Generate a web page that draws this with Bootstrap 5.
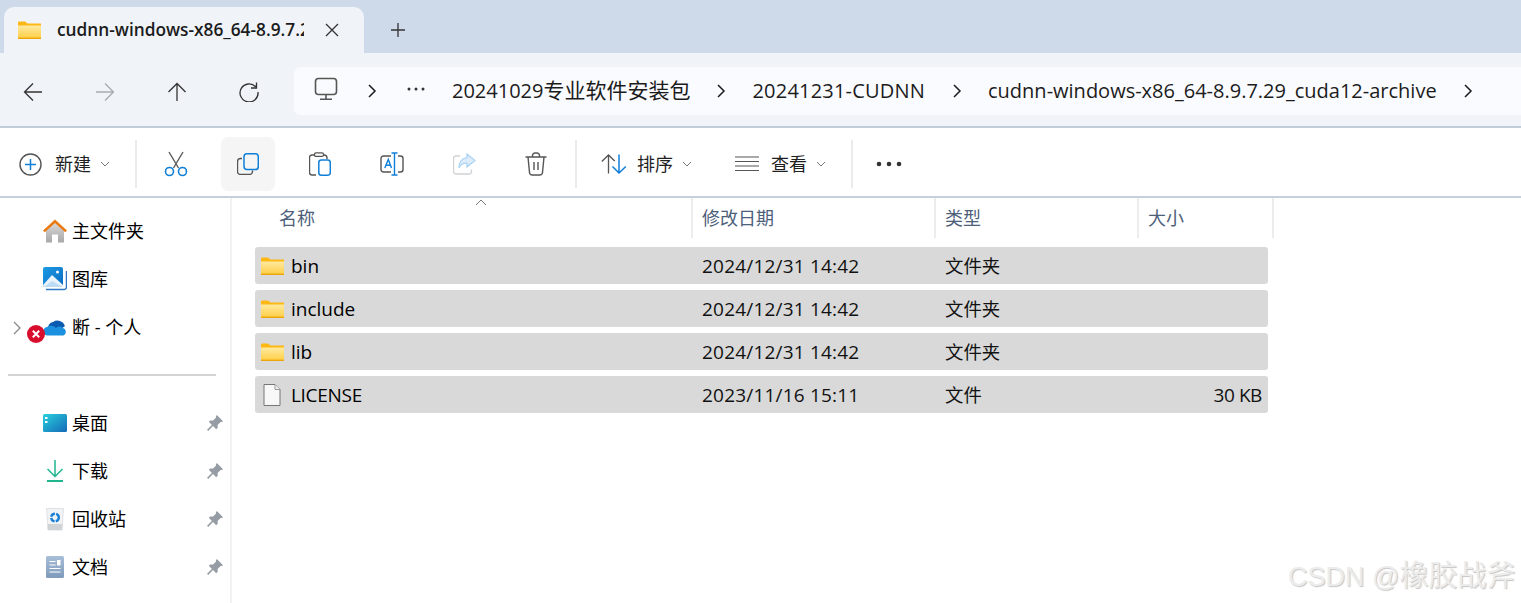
<!DOCTYPE html>
<html lang="zh"><head><meta charset="utf-8"><title>cudnn-windows-x86_64-8.9.7.29_cuda12-archive</title>
<link href="https://cdn.jsdelivr.net/npm/bootstrap@5.3.0/dist/css/bootstrap.min.css" rel="stylesheet">
<style>
html,body{height:100%;overflow:hidden}
body{font-family:"Open Sans","Noto Sans CJK SC",sans-serif;background:#fff;color:#1a1a1a;font-size:19px;position:relative}
.ex-title{height:53px;background:#cedaea;padding-left:4px;padding-top:7px}
.ex-tab{width:360px;height:46px;background:#f0f4f9;border-radius:10px 10px 0 0;padding-left:14px}
.ex-tabname{width:247px;margin-left:16px;overflow:hidden;white-space:nowrap;font-size:17.3px;font-weight:600;color:#1c1c1c;font-family:"Open Sans",sans-serif;flex:none}
.ex-close{margin-left:20px}.ex-plus{margin-left:26px}
.ex-nav{height:75px;background:#f0f4f9;border-bottom:2px solid #c1ccdb;padding-top:14px}
.ex-navbtn{width:72px;height:50px}
.ex-navset{width:294px;flex:none}
.ex-navset>:first-child{margin-left:-3px}
.ex-addr{height:48px;background:#fafbfe;border-radius:7px 0 0 7px;white-space:nowrap;font-size:20px;color:#1c1c1c}
.ex-addr b{font-weight:400;font-size:21px}
.ex-tools{height:70px;border-bottom:2px solid #c5d0df;padding:9px 0 5px}
.ex-tool{width:72px;height:54px;border-radius:7px}
.ex-active{background:#f5f5f5;width:54px;margin:0 9px}
.ex-sep{width:2px;height:48px;background:#ebebeb}
.ex-lbl{font-size:18px;color:#1f1f1f}
.ex-main{height:405px}
.ex-side{width:232px;border-right:2px solid #f2f2f2;padding-top:9px;flex:none}
.ex-sitem{height:48px;position:relative;font-size:18px;color:#000;padding-left:43px}
.ex-sitem svg.ic{width:24px;height:24px;margin-right:5px;flex:none}
.ex-pin{position:absolute;left:207px;top:16px}
.ex-rule{height:48px;padding:0 14px 0 8px}
.ex-rule>div{height:2px;background:#d4d4d4;width:209px}
.ex-files{padding-left:23px;position:relative}
.ex-head{height:40px;font-size:18px;color:#4c607a;width:1019px;margin-bottom:9px}
.ex-hc{height:40px;border-right:2px solid #ececec;padding-left:9px;padding-top:6px;flex:none;line-height:28px}
.ex-row{height:37px;width:1013px;background:#d9d9d9;border-radius:3px;margin-bottom:6px;font-size:19px;color:#111;padding-top:1px}
.ex-c1{width:447px;padding-left:6px;color:#000}
.ex-c1 svg{margin-right:7px;flex:none}
.ex-lic{letter-spacing:-.3px}
.ex-c2{width:243px;letter-spacing:.2px}.ex-c3{width:205px;font-size:18.4px}.ex-c4{width:118px;text-align:right;padding-right:6px;letter-spacing:-.4px}
.ex-sort{position:absolute;left:243px;top:1px}
.ex-mark{position:absolute;left:1288px;top:555px;font-size:29px;line-height:42px;color:#ececec;text-shadow:1px 1px 1px #c6c6c6;font-family:"Liberation Sans","Noto Sans CJK SC",sans-serif;white-space:nowrap}
.ex-mark i{font-style:normal;font-size:27px}
</style></head><body>
<svg width="0" height="0" class="position-absolute"><defs>
<linearGradient id="gf" x1="0" y1="0" x2="0" y2="1"><stop offset="0" stop-color="#ffeaa0"/><stop offset="1" stop-color="#ffcf48"/></linearGradient>
<linearGradient id="gh" x1="0" y1="0" x2="0" y2="1"><stop offset="0" stop-color="#dadada"/><stop offset="1" stop-color="#a8a8a8"/></linearGradient>
<linearGradient id="gd" x1="0" y1="0" x2="1" y2="1"><stop offset="0" stop-color="#2ad0dc"/><stop offset="1" stop-color="#1369b8"/></linearGradient>
<linearGradient id="gp" x1="0" y1="0" x2="1" y2="1"><stop offset="0" stop-color="#1d9be4"/><stop offset="1" stop-color="#0a6bc2"/></linearGradient>
<linearGradient id="gm" x1="0" y1="0" x2="0" y2="1"><stop offset="0" stop-color="#a9bfd8"/><stop offset="1" stop-color="#7e99ba"/></linearGradient>
<symbol id="folder" viewBox="0 0 23 18"><path d="M0 1.500A1 1 0 0 1 1 .5h6l2.500 2H23V5H0z" fill="#fdb813"/><path d="M0 4.500h23V17H0z" fill="url(#gf)"/><path d="M0 16.600h23V18H0z" fill="#eda50c"/></symbol>
<symbol id="pin" viewBox="0 0 16 16"><path d="M9.800 0 16 6.200l-1.400.9-1-.2-3 3 .1 2.900-1.500 1.400-3.200-3.200L1.200 16 0 14.800l4.900-4.800-3.100-3.200 1.400-1.400 2.900.1 3-3-.2-1z" fill="#959ca3"/></symbol>
<symbol id="chev" viewBox="0 0 10 16"><path d="M2 2l6 6-6 6" fill="none" stroke="#1c1c1c" stroke-width="1.500"/></symbol>
<symbol id="dn" viewBox="0 0 10 6"><path d="M1 1l4 4 4-4" fill="none" stroke="#777" stroke-width="1"/></symbol>
</defs></svg>

<div class="ex-title d-flex align-items-start">
 <div class="ex-tab d-flex align-items-center">
  <svg width="23" height="18"><use href="#folder"/></svg>
  <div class="ex-tabname">cudnn-windows-x86_64-8.9.7.29_cuda12-archive</div>
  <svg class="ex-close" width="16" height="16" viewBox="0 0 16 16"><path d="M2 2l12 12M14 2 2 14" stroke="#333" stroke-width="1.300"/></svg>
 </div>
 <svg class="ex-plus align-self-center" width="16" height="16" viewBox="0 0 16 16"><path d="M8 1v14M1 8h14" stroke="#333" stroke-width="1.300"/></svg>
</div>

<div class="ex-nav d-flex">
 <div class="ex-navset d-flex">
  <div class="ex-navbtn d-flex align-items-center justify-content-center"><svg width="20" height="20" viewBox="0 0 20 20"><path d="M19 10H1.500M10 1.500 1.500 10l8.500 8.500" fill="none" stroke="#333" stroke-width="1.300"/></svg></div>
  <div class="ex-navbtn d-flex align-items-center justify-content-center"><svg width="20" height="20" viewBox="0 0 20 20"><path d="M1 10h17.500M10 1.500l8.500 8.500-8.500 8.500" fill="none" stroke="#a8abae" stroke-width="1.300"/></svg></div>
  <div class="ex-navbtn d-flex align-items-center justify-content-center"><svg width="20" height="20" viewBox="0 0 20 20"><path d="M10 19V1.500M1.500 10 10 1.500l8.500 8.500" fill="none" stroke="#333" stroke-width="1.300"/></svg></div>
  <div class="ex-navbtn d-flex align-items-center justify-content-center"><svg width="20" height="20" viewBox="0 0 20 20"><path d="M16.800 5A9 9 0 1 0 19 10" fill="none" stroke="#333" stroke-width="1.300"/><path d="M17.500 .5v5.500H12" fill="none" stroke="#333" stroke-width="1.300"/></svg></div>
 </div>
 <div class="ex-addr flex-grow-1 d-flex align-items-center">
  <svg width="24" height="24" viewBox="0 0 24 24" style="margin-left:20px;margin-top:-4px"><rect x="1.500" y="1.500" width="21" height="16" rx="3" fill="none" stroke="#555" stroke-width="1.600"/><path d="M12 18v4M6 22.300h12" stroke="#555" stroke-width="1.600"/></svg>
  <svg width="10" height="16" style="margin-left:29px"><use href="#chev"/></svg>
  <svg width="18" height="4" viewBox="0 0 18 4" style="margin-left:30px;margin-top:-4px"><circle cx="2" cy="2" r="1.500" fill="#333"/><circle cx="9" cy="2" r="1.500" fill="#333"/><circle cx="16" cy="2" r="1.500" fill="#333"/></svg>
  <span style="margin-left:27px">20241029<b>专业软件安装包</b></span>
  <svg width="10" height="16" style="margin-left:26px"><use href="#chev"/></svg>
  <span style="margin-left:26px;letter-spacing:.2px">20241231-CUDNN</span>
  <svg width="10" height="16" style="margin-left:27px"><use href="#chev"/></svg>
  <span style="margin-left:26px">cudnn-windows-x86_64-8.9.7.29_cuda12-archive</span>
  <svg width="10" height="16" style="margin-left:26px"><use href="#chev"/></svg>
 </div>
</div>

<div class="ex-tools d-flex align-items-center">
 <div class="d-flex align-items-center" style="width:135px;padding-left:19px">
  <svg width="23" height="23" viewBox="0 0 23 23"><circle cx="11.500" cy="11.500" r="10.500" fill="none" stroke="#555" stroke-width="1.400"/><path d="M11.500 6v11M6 11.500h11" stroke="#0f7fd8" stroke-width="1.500"/></svg>
  <span class="ex-lbl" style="margin-left:13px">新建</span>
  <svg width="10" height="6" style="margin-left:9px"><use href="#dn"/></svg>
 </div>
 <div class="ex-sep"></div>
 <div class="ex-tool d-flex align-items-center justify-content-center" style="margin-left:3px">
  <svg width="24" height="26" viewBox="0 0 24 26"><path d="M5 1l9.500 16M19 1 9.500 17" stroke="#5a5a5a" stroke-width="1.400"/><circle cx="5.500" cy="20.500" r="4" fill="none" stroke="#0f7fd8" stroke-width="1.600"/><circle cx="18.500" cy="20.500" r="4" fill="none" stroke="#0f7fd8" stroke-width="1.600"/></svg>
 </div>
 <div class="ex-tool ex-active d-flex align-items-center justify-content-center">
  <svg width="22" height="22" viewBox="0 0 22 22"><path d="M5 5.500H3.500a3 3 0 0 0-3 3V18.500a3 3 0 0 0 3 3h9a3 3 0 0 0 3-3V17.500" fill="none" stroke="#555" stroke-width="1.400"/><rect x="7" y=".8" width="14.300" height="15.800" rx="3" fill="none" stroke="#0f7fd8" stroke-width="1.500"/></svg>
 </div>
 <div class="ex-tool d-flex align-items-center justify-content-center">
  <svg width="22" height="24" viewBox="0 0 22 24"><path d="M6 3H3a2.500 2.500 0 0 0-2.500 2.500V20.500A2.500 2.500 0 0 0 3 23h4M14 3h1a3 3 0 0 1 3 3v1" fill="none" stroke="#555" stroke-width="1.400"/><rect x="5.500" y=".8" width="9" height="3.600" rx="1.500" fill="none" stroke="#555" stroke-width="1.300"/><rect x="9.800" y="8" width="11.500" height="15.200" rx="2.500" fill="none" stroke="#0f7fd8" stroke-width="1.500"/></svg>
 </div>
 <div class="ex-tool d-flex align-items-center justify-content-center">
  <svg width="24" height="24" viewBox="0 0 24 24"><path d="M11 4H3.500A2.500 2.500 0 0 0 1 6.500v11A2.500 2.500 0 0 0 3.500 20H11M18 4h2.500A2.500 2.500 0 0 1 23 6.500v11a2.500 2.500 0 0 1-2.500 2.500H18" fill="none" stroke="#555" stroke-width="1.400"/><path d="M11.500 1h6M11.500 23h6M14.500 1v22M4.800 16 8.300 7.500 11.500 16M6 13.300h4.500" fill="none" stroke="#0f7fd8" stroke-width="1.400"/></svg>
 </div>
 <div class="ex-tool d-flex align-items-center justify-content-center">
  <svg width="23" height="22" viewBox="0 0 23 22"><path d="M7 3H3a2.500 2.500 0 0 0-2.500 2.500v13A2.500 2.500 0 0 0 3 21h13a2.500 2.500 0 0 0 2.500-2.500v-2" fill="none" stroke="#cfd2d5" stroke-width="1.300"/><path d="M14 1l8 6.500-8 6.500v-3.800C10 10 7.500 11.500 6 15c0-6 3-10 8-10.300z" fill="#dcecfa" stroke="#a9d2f3" stroke-width="1.200"/></svg>
 </div>
 <div class="ex-tool d-flex align-items-center justify-content-center">
  <svg width="22" height="24" viewBox="0 0 22 24"><path d="M.5 5h21M7.500 5V3.500a2.500 2.500 0 0 1 2.500-2.500h2a2.500 2.500 0 0 1 2.500 2.500V5M3 5l1.500 15.500A2.800 2.800 0 0 0 7.300 23h7.400a2.800 2.800 0 0 0 2.800-2.500L19 5M9 10v8M13 10v8" fill="none" stroke="#555" stroke-width="1.400"/></svg>
 </div>
 <div class="ex-sep" style="margin-left:3px"></div>
 <div class="d-flex align-items-center" style="margin-left:24px;width:134px">
  <svg width="26" height="20" viewBox="0 0 26 20"><path d="M7.500 19.500V1M.8 7.500 7.500 1l6.200 6" fill="none" stroke="#555" stroke-width="1.300"/><path d="M18 .5V19M11.500 12.500 18 19l6.800-6.500" fill="none" stroke="#0f7fd8" stroke-width="1.500"/></svg>
  <span class="ex-lbl" style="margin-left:10px">排序</span>
  <svg width="10" height="6" style="margin-left:9px"><use href="#dn"/></svg>
 </div>
 <div class="d-flex align-items-center" style="width:116px">
  <svg width="24" height="16" viewBox="0 0 24 16"><path d="M0 1h24M0 5.500h24M0 10h24M0 14.500h24" stroke="#555" stroke-width="1.200"/></svg>
  <span class="ex-lbl" style="margin-left:12px">查看</span>
  <svg width="10" height="6" style="margin-left:9px"><use href="#dn"/></svg>
 </div>
 <div class="ex-sep"></div>
 <svg width="26" height="6" viewBox="0 0 26 6" style="margin-left:23px"><circle cx="3" cy="3" r="2.300" fill="#333"/><circle cx="13" cy="3" r="2.300" fill="#333"/><circle cx="23" cy="3" r="2.300" fill="#333"/></svg>
</div>

<div class="ex-main d-flex">
 <div class="ex-side">
  <div class="ex-sitem d-flex align-items-center"><svg class="ic" viewBox="0 0 24 24"><path d="M3 11 12 3l9 8v12.500H15v-8H9v8H3z" fill="url(#gh)"/><path d="M0 11.500 12 .5l12 11-1.800 1.800L12 4 1.800 13.300z" fill="#ea7a10"/></svg>主文件夹</div>
  <div class="ex-sitem d-flex align-items-center"><svg class="ic" viewBox="0 0 24 24"><path d="M3 22.500h18a2.500 2.500 0 0 0 2.500-2.500V4" fill="none" stroke="#2f78c8" stroke-width="1.500"/><rect y="0" width="20" height="20" rx="2" fill="url(#gp)"/><circle cx="14.500" cy="5" r="1.500" fill="#fff"/><path d="M0 18 9 8l11 10v2H2a2 2 0 0 1-2-2z" fill="#e9f3fc"/><path d="M1 20l8-6 11 6z" fill="#bcdcf6"/></svg>图库</div>
  <div class="ex-sitem d-flex align-items-center">
   <svg class="position-absolute" style="left:13px;top:18px" width="9" height="14" viewBox="0 0 9 14"><path d="M1 1l6 6-6 6" fill="none" stroke="#8a8a8a" stroke-width="1.300"/></svg>
   <svg class="ic" viewBox="0 0 24 24"><path d="M5 14a6 6 0 0 1 5-7 8 8 0 0 1 12 4l-8 6z" fill="#0b5cb0"/><path d="M4.500 20.500a4.300 4.300 0 0 1-.5-8.500 7 7 0 0 1 9 1 5.500 5.500 0 0 1 7 0 4 4 0 0 1 .5 7.500z" fill="#1c91e0"/></svg>断 - 个人
   <svg class="position-absolute" style="left:27px;top:22px" width="18" height="18" viewBox="0 0 18 18"><circle cx="9" cy="9" r="9" fill="#d90d2c"/><path d="M5.800 5.800l6.400 6.400M12.200 5.800l-6.400 6.400" stroke="#fff" stroke-width="2"/></svg>
  </div>
  <div class="ex-rule d-flex align-items-center"><div></div></div>
  <div class="ex-sitem d-flex align-items-center"><svg class="ic" viewBox="0 0 24 24"><rect y="3" width="24" height="18" rx="1.500" fill="url(#gd)"/><path d="M2 6h2.500v2H2zM2 10h2.500v2H2z" fill="#fff"/></svg>桌面<svg class="ex-pin" width="16" height="16"><use href="#pin"/></svg></div>
  <div class="ex-sitem d-flex align-items-center"><svg class="ic" viewBox="0 0 24 24"><path d="M12 1v16M4.500 10l7.500 7.500 7.500-7.500" fill="none" stroke="#1fb58f" stroke-width="1.500"/><path d="M4 22h16" stroke="#1fb58f" stroke-width="2"/></svg>下载<svg class="ex-pin" width="16" height="16"><use href="#pin"/></svg></div>
  <div class="ex-sitem d-flex align-items-center"><svg class="ic" viewBox="0 0 24 24"><path d="M3.500 1.500h17L19 23H5z" fill="#f1f3f5" stroke="#dfe2e4" stroke-width="1"/><path d="M4.600 17h14.800L19 23H5z" fill="#cfd3d6"/><circle cx="12" cy="10.500" r="3.800" fill="none" stroke="#1a7fd6" stroke-width="2.400" stroke-dasharray="5 1.200"/></svg>回收站<svg class="ex-pin" width="16" height="16"><use href="#pin"/></svg></div>
  <div class="ex-sitem d-flex align-items-center"><svg class="ic" viewBox="0 0 24 24"><rect x="3" y="1" width="18" height="22" rx="1.500" fill="url(#gm)"/><path d="M6.500 6.500h6M6.500 10h6M6.500 13.500h11M6.500 17h11" stroke="#fff" stroke-width="1.200"/><path d="M14 5h3.500v5.500H14z" fill="#fff"/></svg>文档<svg class="ex-pin" width="16" height="16"><use href="#pin"/></svg></div>
 </div>
 <div class="ex-files flex-grow-1">
  <svg class="ex-sort" width="12" height="7" viewBox="0 0 12 7"><path d="M1 6l5-5 5 5" fill="none" stroke="#777" stroke-width="1"/></svg>
  <div class="ex-head d-flex">
   <div class="ex-hc" style="width:438px;padding-left:24px">名称</div>
   <div class="ex-hc" style="width:243px">修改日期</div>
   <div class="ex-hc" style="width:203px">类型</div>
   <div class="ex-hc" style="width:135px">大小</div>
  </div>
  <div class="ex-row d-flex align-items-center"><div class="ex-c1 d-flex align-items-center"><svg width="23" height="18"><use href="#folder"/></svg>bin</div><div class="ex-c2">2024/12/31 14:42</div><div class="ex-c3">文件夹</div><div class="ex-c4"></div></div>
  <div class="ex-row d-flex align-items-center"><div class="ex-c1 d-flex align-items-center"><svg width="23" height="18"><use href="#folder"/></svg>include</div><div class="ex-c2">2024/12/31 14:42</div><div class="ex-c3">文件夹</div><div class="ex-c4"></div></div>
  <div class="ex-row d-flex align-items-center"><div class="ex-c1 d-flex align-items-center"><svg width="23" height="18"><use href="#folder"/></svg>lib</div><div class="ex-c2">2024/12/31 14:42</div><div class="ex-c3">文件夹</div><div class="ex-c4"></div></div>
  <div class="ex-row d-flex align-items-center"><div class="ex-c1 d-flex align-items-center"><svg width="23" height="22" viewBox="0 0 23 22"><path d="M3 .5h11l5 5v16H3z" fill="#f8f8f8" stroke="#777" stroke-width="1"/><path d="M14 .5v5h5" fill="#eee" stroke="#999" stroke-width="1"/></svg><span class="ex-lic">LICENSE</span></div><div class="ex-c2">2023/11/16 15:11</div><div class="ex-c3">文件</div><div class="ex-c4">30 KB</div></div>
 </div>
</div>
<div class="ex-mark"><i>CSDN @</i>橡胶战斧</div>
</body></html>
